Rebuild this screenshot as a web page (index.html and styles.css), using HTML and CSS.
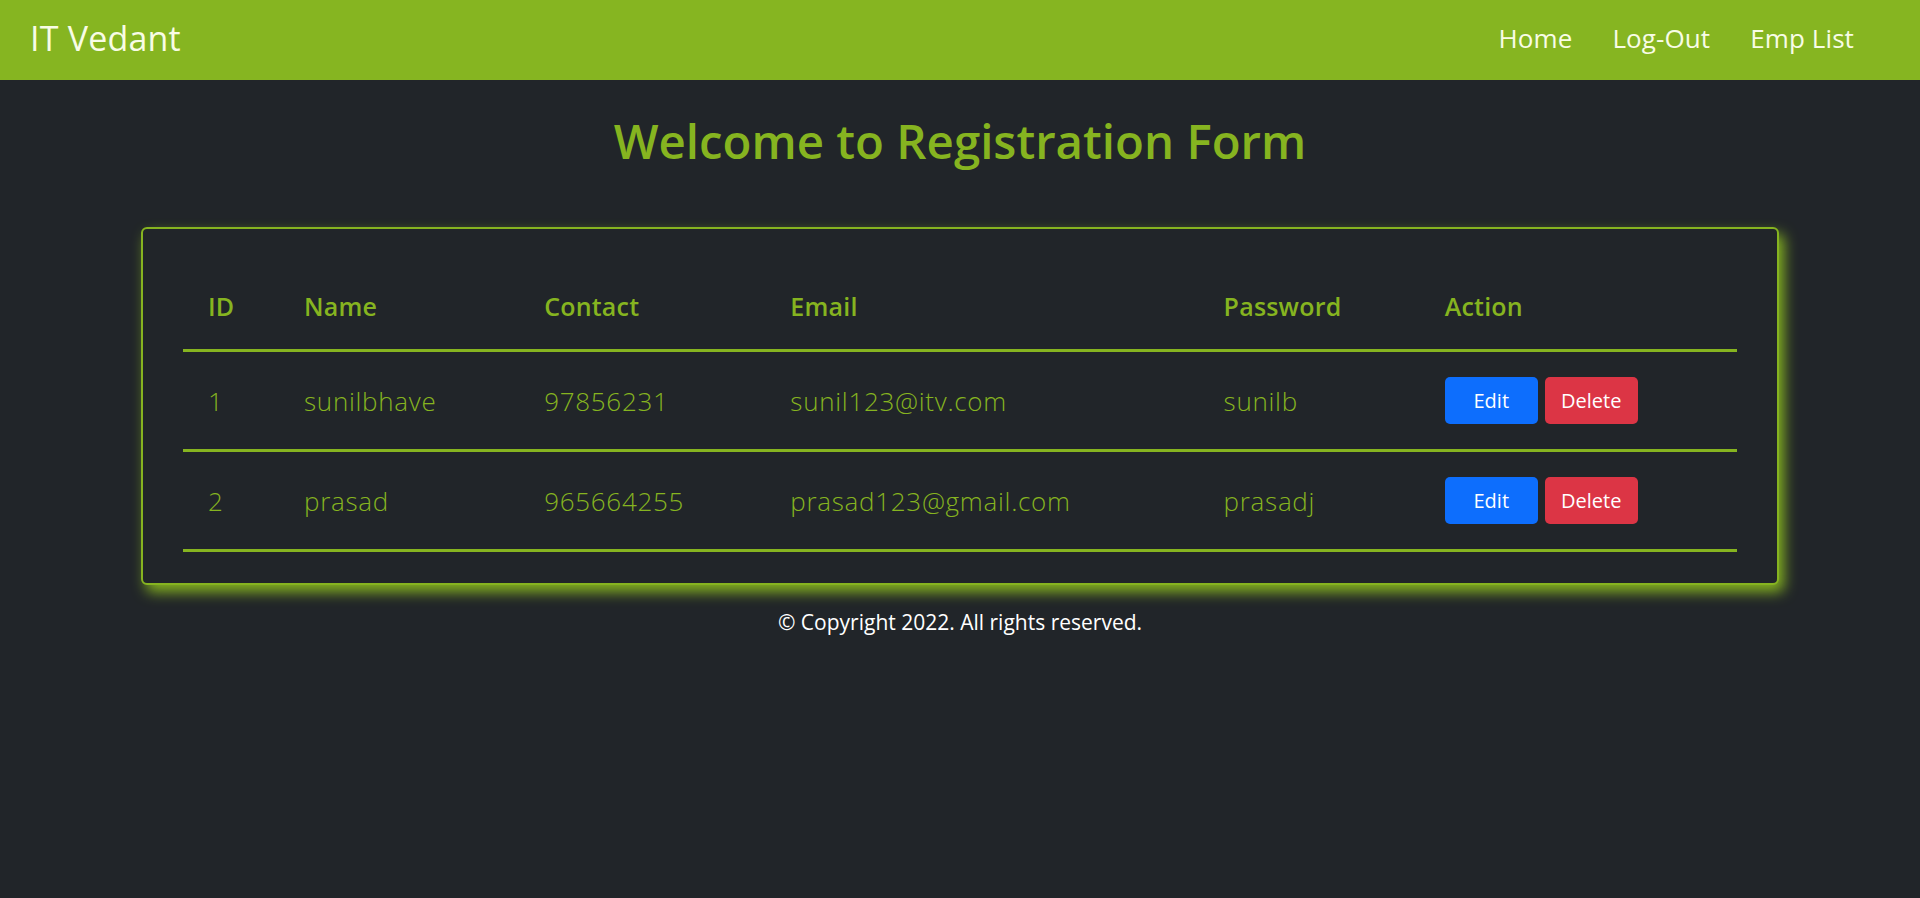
FILE: index.html
```html
<!DOCTYPE html>
<html lang="en">
<head>
<meta charset="utf-8">
<title>Registration</title>
<link rel="stylesheet" href="styles.css">
</head>
<body>
<nav class="navbar">
  <a class="brand" href="#">IT Vedant</a>
  <ul class="nav-links">
    <li><a href="#">Home</a></li>
    <li><a href="#">Log-Out</a></li>
    <li><a href="#">Emp List</a></li>
  </ul>
</nav>
<main class="main">
  <h1 class="title">Welcome to Registration Form</h1>
  <section class="card">
    <table class="emp-table">
      <colgroup>
        <col class="c-id"><col class="c-name"><col class="c-contact"><col class="c-email"><col class="c-pass"><col class="c-action">
      </colgroup>
      <thead>
        <tr><th>ID</th><th>Name</th><th>Contact</th><th>Email</th><th>Password</th><th>Action</th></tr>
      </thead>
      <tbody>
        <tr>
          <td>1</td><td>sunilbhave</td><td>97856231</td><td>sunil123@itv.com</td><td>sunilb</td>
          <td><div class="actions"><a class="btn btn-edit" href="#">Edit</a><a class="btn btn-delete" href="#">Delete</a></div></td>
        </tr>
        <tr>
          <td>2</td><td>prasad</td><td>965664255</td><td>prasad123@gmail.com</td><td>prasadj</td>
          <td><div class="actions"><a class="btn btn-edit" href="#">Edit</a><a class="btn btn-delete" href="#">Delete</a></div></td>
        </tr>
      </tbody>
    </table>
  </section>
</main>
<footer class="footer">
  <p>© Copyright 2022. All rights reserved.</p>
</footer>
</body>
</html>
```
FILE: styles.css
```css
* { box-sizing: border-box; }
html, body { margin: 0; padding: 0; }
body {
  background: #212529;
  font-family: "Open Sans", "Liberation Sans", sans-serif;
  color: #86b420;
  min-height: 898px;
}
a { text-decoration: none; }

.navbar {
  height: 80px;
  background: #86b521;
  display: flex;
  align-items: center;
  justify-content: space-between;
  padding: 0 46px 4px 30px;
}
.brand {
  font-size: 34px;
  line-height: 40px;
  letter-spacing: 0.2px;
  color: #f8fce6;
  font-weight: 400;
}
.nav-links {
  list-style: none;
  margin: 0;
  padding: 0;
  display: flex;
}
.nav-links a {
  display: block;
  padding: 0 20px;
  font-size: 26px;
  line-height: 36px;
  letter-spacing: 0.1px;
  color: #f8fce6;
}

.main {
  display: flex;
  flex-direction: column;
  align-items: center;
}
.title {
  margin: 32px 0 57px;
  font-size: 47.4px;
  line-height: 58px;
  font-weight: 600;
  color: #86b420;
  text-align: center;
}
.card {
  width: 1638px;
  border: 2px solid #86b420;
  border-radius: 6px;
  padding: 34px 40px 31px;
  box-shadow: 5px 7px 14px rgba(134, 180, 32, 1);
  background: #212529;
}
.emp-table {
  width: 100%;
  border-collapse: collapse;
  table-layout: fixed;
}
.c-id { width: 96px; }
.c-name { width: 240px; }
.c-contact { width: 246px; }
.c-email { width: 433px; }
.c-pass { width: 221px; }
.c-action { width: 317px; }

.emp-table th {
  text-align: left;
  font-weight: 600;
  font-size: 25px;
  line-height: 38px;
  letter-spacing: 0.2px;
  padding: 24px 25px;
  border-bottom: 3px solid #86b420;
}
.emp-table td {
  font-weight: 300;
  font-size: 26px;
  line-height: 38px;
  letter-spacing: 0.7px;
  padding: 25px 25px;
  vertical-align: middle;
  border-bottom: 3px solid #86b420;
  white-space: nowrap;
}
.actions {
  display: flex;
  gap: 7px;
  letter-spacing: 0;
}
.btn {
  display: flex;
  align-items: center;
  justify-content: center;
  height: 47px;
  min-width: 93px;
  padding: 0 14px;
  border-radius: 5px;
  font-size: 20px;
  font-weight: 400;
  color: #ffffff;
}
.btn-edit { background: #0d6efd; }
.btn-delete { background: #dc3545; }

.footer {
  padding: 22px 0;
  text-align: center;
}
.footer p {
  margin: 0;
  font-size: 21px;
  line-height: 31px;
  color: #ffffff;
}
```
